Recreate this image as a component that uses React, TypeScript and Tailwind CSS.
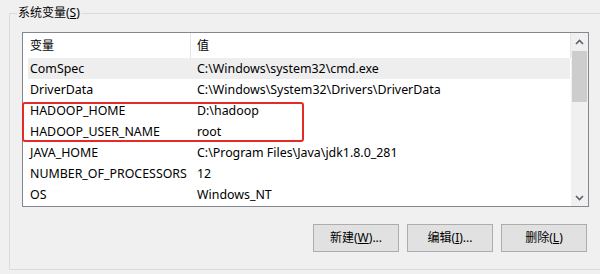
import React from 'react';

const rows: [string, string][] = [
    ['ComSpec', 'C:\\Windows\\system32\\cmd.exe'],
    ['DriverData', 'C:\\Windows\\System32\\Drivers\\DriverData'],
    ['HADOOP_HOME', 'D:\\hadoop'],
    ['HADOOP_USER_NAME', 'root'],
    ['JAVA_HOME', 'C:\\Program Files\\Java\\jdk1.8.0_281'],
    ['NUMBER_OF_PROCESSORS', '12'],
    ['OS', 'Windows_NT'],
];

const font = { fontFamily: '"Noto Sans", "Noto Sans CJK SC", sans-serif' };

const Btn: React.FC<{ label: string; hot: string; dots?: boolean }> = ({ label, hot, dots }) => (
    <button className="w-[86px] h-[28px] bg-[#e1e1e1] border border-[#adadad] text-[12px] text-black flex items-center justify-center">
        {label}(<span className="underline">{hot}</span>){dots ? '...' : ''}
    </button>
);

export default function App() {
    return (
        <div className="w-[600px] h-[274px] bg-[#f0f0f0] overflow-hidden pt-[13px] pl-[9px] text-[12px] text-black" style={font}>
            <div className="relative w-[600px] h-[257px] border border-[#dcdcdc]">
                <div className="absolute left-[7px] top-[-10px] px-[1px] bg-[#f0f0f0] leading-[18px]">
                    系统变量(<span className="underline">S</span>)
                </div>

                <div className="ml-[12px] mt-[18px] w-[567px] h-[175px] border border-[#828790] bg-white flex">
                    <div className="w-[548px] flex flex-col">
                        <div className="h-[25px] flex items-center">
                            <div className="w-[168px] h-full pl-[7px] flex items-center border-r border-[#e5e5e5]">变量</div>
                            <div className="flex-1 h-full pl-[6px] flex items-center border-r border-[#e5e5e5]">值</div>
                        </div>
                        {rows.map(([k, v], i) => (
                            <div
                                key={k}
                                className={`h-[21px] ml-[5px] mr-[1px] pt-[1px] flex items-center text-[12.4px] ${i === 0 ? 'bg-[#eeeeee]' : ''}`}
                            >
                                <div className="w-[164px] pl-[2px] whitespace-nowrap">{k}</div>
                                <div className="pl-[5px] whitespace-nowrap">{v}</div>
                            </div>
                        ))}
                    </div>
                    <div className="w-[17px] h-full bg-[#f0f0f0] flex flex-col items-center">
                        <div className="h-[17px] w-full flex items-center justify-center">
                            <svg width="9" height="6" viewBox="0 0 9 6">
                                <path d="M1 5 L4.5 1.5 L8 5" stroke="#606060" strokeWidth="1.6" fill="none" />
                            </svg>
                        </div>
                        <div className="w-[15px] h-[51px] bg-[#cdcdcd] mt-[1px]" />
                        <div className="flex-1" />
                        <div className="h-[17px] w-full flex items-center justify-center">
                            <svg width="9" height="6" viewBox="0 0 9 6">
                                <path d="M1 1 L4.5 4.5 L8 1" stroke="#606060" strokeWidth="1.6" fill="none" />
                            </svg>
                        </div>
                    </div>
                </div>

                <div className="absolute left-[12px] top-[88px] w-[282px] h-[40px] border-2 border-[#e52a2a] rounded-[3px]" />

                <div className="ml-[303px] mt-[17px] flex gap-[8px]">
                    <Btn label="新建" hot="W" dots />
                    <Btn label="编辑" hot="I" dots />
                    <Btn label="删除" hot="L" />
                </div>
            </div>
        </div>
    );
}
